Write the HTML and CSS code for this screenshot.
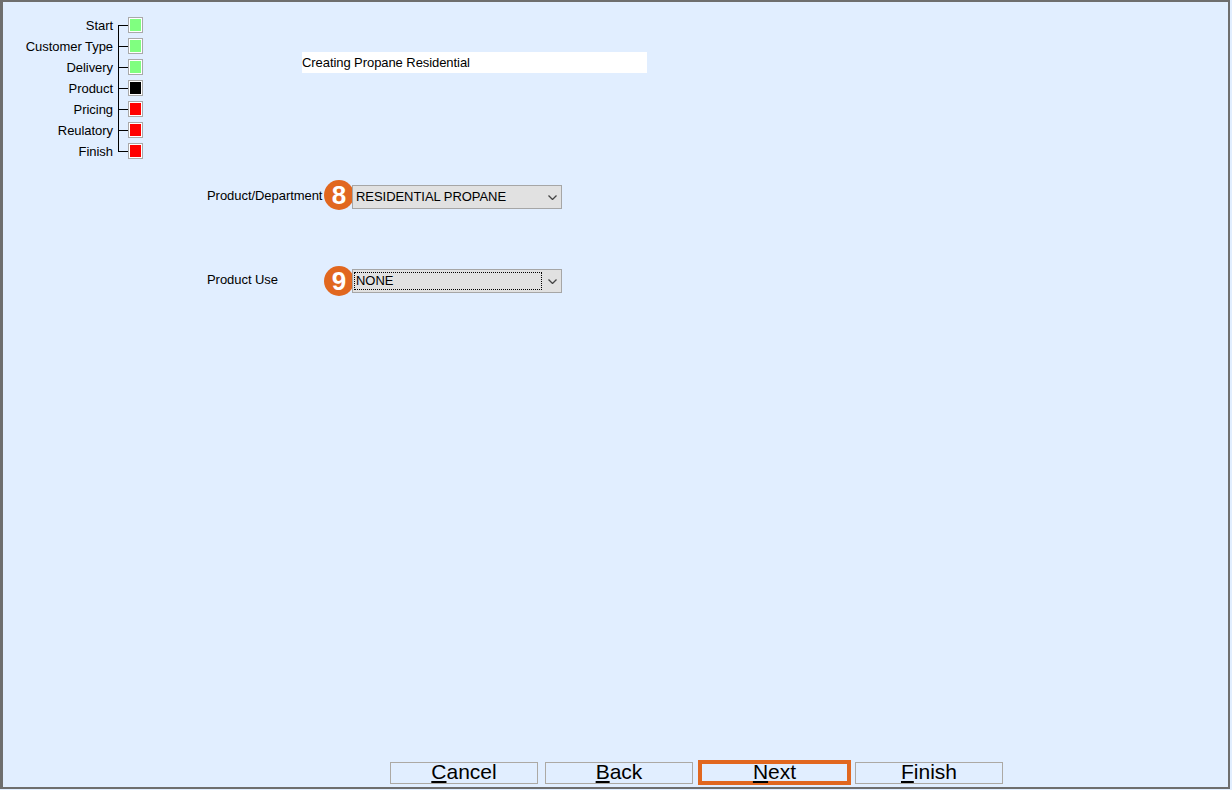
FILE: index.html
```html
<!DOCTYPE html>
<html lang="en">
<head>
<meta charset="utf-8">
<title>Creating Propane Residential</title>
<link rel="stylesheet" href="styles.css">
</head>
<body>
<div class="frame">
  <div class="top">
    <ul class="steps">
      <li class="step"><span class="step-label">Start</span><span class="box done"></span></li>
      <li class="step"><span class="step-label">Customer Type</span><span class="box done"></span></li>
      <li class="step"><span class="step-label">Delivery</span><span class="box done"></span></li>
      <li class="step"><span class="step-label">Product</span><span class="box current"></span></li>
      <li class="step"><span class="step-label">Pricing</span><span class="box todo"></span></li>
      <li class="step"><span class="step-label">Reulatory</span><span class="box todo"></span></li>
      <li class="step last"><span class="step-label">Finish</span><span class="box todo"></span></li>
    </ul>
    <div class="title">Creating Propane Residential</div>
  </div>
  <div class="form">
    <div class="field">
      <span class="field-label">Product/Department</span>
      <span class="badge">8</span>
      <div class="select"><span class="select-text">RESIDENTIAL PROPANE</span>
        <svg class="chev" width="9" height="5" viewBox="0 0 9 5"><path d="M.5.5l4 4 4-4" fill="none" stroke="#444" stroke-width="1.3"/></svg>
      </div>
    </div>
    <div class="field second">
      <span class="field-label">Product Use</span>
      <span class="badge">9</span>
      <div class="select"><span class="select-text focus">NONE</span>
        <svg class="chev" width="9" height="5" viewBox="0 0 9 5"><path d="M.5.5l4 4 4-4" fill="none" stroke="#444" stroke-width="1.3"/></svg>
      </div>
    </div>
  </div>
  <div class="actions">
    <button class="btn"><u>C</u>ancel</button>
    <button class="btn"><u>B</u>ack</button>
    <button class="btn primary"><u>N</u>ext</button>
    <button class="btn"><u>F</u>inish</button>
  </div>
</div>
</body>
</html>
```
FILE: styles.css
```css
* { box-sizing: border-box; }
html, body { margin: 0; height: 100%; }
body {
  width: 1232px;
  height: 790px;
  overflow: hidden;
  background: #e1eeff;
  font-family: "Liberation Sans", Arial, sans-serif;
  font-size: 13px;
  letter-spacing: -0.05px;
  color: #000;
}
.frame {
  width: 1230px;
  height: 789px;
  background: #e1eeff;
  border-style: solid;
  border-color: #6e6e6e;
  border-width: 2px 2px 2px 3px;
  display: flex;
  flex-direction: column;
}
.top {
  display: flex;
  align-items: flex-start;
  height: 183px;
  padding-top: 13px;
}
.steps {
  list-style: none;
  margin: 0;
  padding: 0;
  width: 140px;
}
.step {
  height: 21px;
  display: flex;
  align-items: center;
  justify-content: flex-end;
  position: relative;
}
.step-label { margin-right: 5px; white-space: nowrap; }
.box {
  width: 15px;
  height: 16px;
  margin: 0 0 1px 10px;
  border: 1px solid #a9a9a9;
  box-shadow: inset 0 0 0 1px #fff;
  position: relative;
}
.box::before {
  content: "";
  position: absolute;
  left: -11px;
  top: 7px;
  width: 10px;
  height: 1px;
  background: #000;
}
.box::after {
  content: "";
  position: absolute;
  left: -11px;
  top: 7px;
  width: 1px;
  height: 22px;
  background: #000;
}
.last .box::after { display: none; }
.done { background: #80ff80; }
.current { background: #000; }
.todo { background: #ff0000; }
.title {
  width: 345px;
  height: 21px;
  margin: 37px 0 0 159px;
  background: #fff;
  line-height: 21px;
  letter-spacing: -0.07px;
}
.form { flex: 1; padding-left: 204px; }
.field {
  display: flex;
  align-items: flex-start;
  position: relative;
  height: 24px;
}
.second { margin-top: 60px; }
.field-label { width: 145px; line-height: 24px; margin-top: -1px; white-space: nowrap; }
.badge {
  position: absolute;
  left: 117px;
  top: -5px;
  width: 30px;
  height: 30px;
  border-radius: 50%;
  background: #e1671f;
  color: #fff;
  font-size: 26px;
  font-weight: 700;
  letter-spacing: 0;
  line-height: 30px;
  text-align: center;
}
.second .badge { top: -3px; }
.select {
  width: 210px;
  height: 24px;
  background: #e1e1e1;
  border: 1px solid #a6a6a6;
  position: relative;
  padding: 2px 19px 2px 1px;
  line-height: 18px;
}
.select-text {
  display: block;
  height: 18px;
  padding-left: 2px;
  white-space: nowrap;
}
.focus { outline: 1px dotted #000; outline-offset: -1px; }
.chev { position: absolute; right: 4px; top: 9px; }
.actions {
  display: flex;
  gap: 7px;
  padding: 0 0 2px 387px;
  align-items: center;
}
.btn {
  width: 148px;
  height: 22px;
  padding: 0 0 2px;
  margin: 0;
  background: #e1eeff;
  border: 1px solid #aca9a4;
  font-family: inherit;
  font-size: 21px;
  letter-spacing: 0;
  line-height: 18px;
  color: #000;
}
.primary {
  width: 153px;
  height: 25px;
  padding-bottom: 1px;
  margin: 0 -3px 0 -2px;
  border: 4px solid #e1671f;
  line-height: 16px;
}
```
